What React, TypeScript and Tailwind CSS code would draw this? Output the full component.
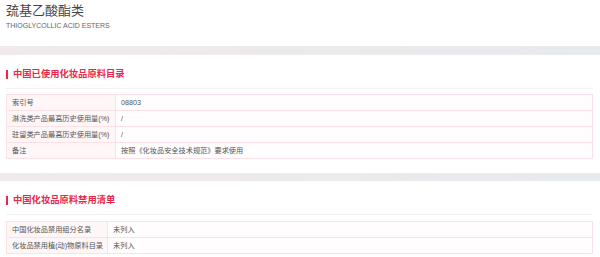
const font = { fontFamily: '"Liberation Sans", "Noto Sans CJK SC", sans-serif' }

const usedRows = [
  { label: '索引号', value: '08803' },
  { label: '淋洗类产品最高历史使用量(%)', value: '/' },
  { label: '驻留类产品最高历史使用量(%)', value: '/' },
  { label: '备注', value: '按照《化妆品安全技术规范》要求使用' },
]

const bannedRows = [
  { label: '中国化妆品禁用组分名录', value: '未列入' },
  { label: '化妆品禁用植(动)物原料目录', value: '未列入' },
]

function Band({ className }: { className: string }) {
  return <div className={`w-full bg-gradient-to-r from-[#f1e9ec] to-[#e7ebee] ${className}`} />
}

function SectionTitle({ text }: { text: string }) {
  return (
    <div>
      <div className="flex items-center gap-[5px]">
        <span className="w-[2px] h-[9px] bg-[#e8284a]" />
        <h2 className="text-[9.3px] leading-[9px] font-bold text-[#e8284a]">{text}</h2>
      </div>
      <div className="mt-[9px] border-b border-[#f3f1f2]" />
    </div>
  )
}

function InfoTable({ rows, labelWidth }: { rows: { label: string; value: string }[]; labelWidth: string }) {
  return (
    <div className="border-t border-x border-[#fbe1e6]">
      {rows.map(r => (
        <div key={r.label} className="flex h-[16px] border-b border-[#fbe1e6] text-[7.2px] leading-[15px] text-[#555]">
          <div className={`${labelWidth} shrink-0 bg-[#fff6f7] border-r border-[#fbe1e6] pl-[5px] whitespace-nowrap`}>
            {r.label}
          </div>
          <div className="flex-1 pl-[5px] bg-[#fffdfd]">{r.value}</div>
        </div>
      ))}
    </div>
  )
}

export default function App() {
  return (
    <div className="w-[600px] h-[257px] bg-white overflow-hidden" style={font}>
      <div className="h-[46px] px-[6px] pt-[2px]">
        <h1 className="text-[13px] leading-[17px] text-[#444]">巯基乙酸酯类</h1>
        <p className="mt-[3px] text-[7px] leading-[8px] text-[#666]">THIOGLYCOLLIC ACID ESTERS</p>
      </div>
      <Band className="h-[9px]" />
      <div className="pl-[6px] pr-[7px] pt-[15px]">
        <SectionTitle text="中国已使用化妆品原料目录" />
        <div className="mt-[5px]">
          <InfoTable rows={usedRows} labelWidth="w-[109px]" />
        </div>
      </div>
      <Band className="h-[8px] mt-[14px]" />
      <div className="pl-[6px] pr-[7px] pt-[15px]">
        <SectionTitle text="中国化妆品原料禁用清单" />
        <div className="mt-[6px]">
          <InfoTable rows={bannedRows} labelWidth="w-[101px]" />
        </div>
      </div>
    </div>
  )
}
